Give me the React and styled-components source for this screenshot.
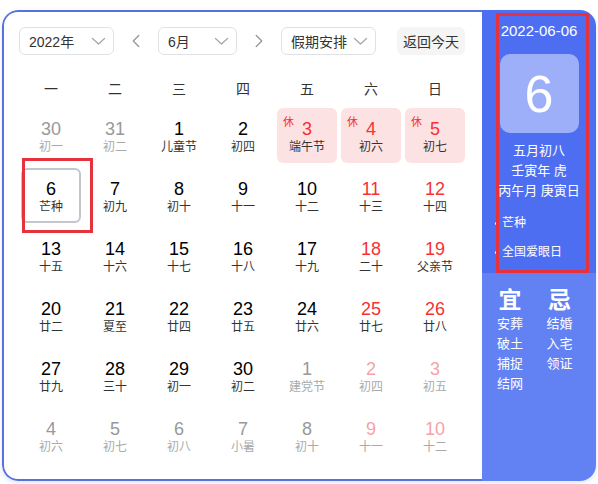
import React from 'react';
import styled, {createGlobalStyle} from 'styled-components';
import {ChevronLeft, ChevronRight} from 'lucide-react';

const GlobalStyle = createGlobalStyle`
  body {
    margin: 0;
    padding: 10px 2px 3px 2px;
    background: #fff;
    font-family: "Liberation Sans", "Noto Sans CJK SC", sans-serif;
  }
`
const Card = styled.div`
  position: relative;
  display: flex;
  width: 594px;
  height: 471px;
  border-radius: 16px;
  overflow: hidden;
  box-shadow: 0 2px 4px rgba(78, 110, 242, 0.18);
`
const Main = styled.div`
  flex: 1;
  box-sizing: border-box;
  border: 2px solid #5872dc;
  border-right: none;
  border-radius: 16px 0 0 16px;
  padding: 15px 15px 0 15px;
  background: #fff;
`
const Toolbar = styled.div`
  display: flex;
  align-items: center;
  height: 28px;
`
const Select = styled.div`
  box-sizing: border-box;
  display: flex;
  align-items: center;
  justify-content: space-between;
  width: ${props => props.w}px;
  height: 28px;
  padding: 0 7px 0 9px;
  border: 1px solid #dfe1e5;
  border-radius: 6px;
  font-size: 14px;
  color: #333;
`
const Arrow = styled.div`
  width: 44px;
  display: flex;
  justify-content: center;
  color: #9a9a9a;
`
const TodayBtn = styled.div`
  margin-left: 21px;
  width: 68px;
  height: 28px;
  display: flex;
  align-items: center;
  justify-content: center;
  background: #f5f5f6;
  border-radius: 6px;
  font-size: 14px;
  color: #333;
`
const WeekHead = styled.div`
  display: grid;
  grid-template-columns: repeat(7, 64px);
  margin-top: 22px;
  height: 24px;
  line-height: 24px;
  font-size: 14px;
  color: #333;
  text-align: center;
`
const Grid = styled.div`
  display: grid;
  grid-template-columns: repeat(7, 64px);
  grid-auto-rows: 55px;
  row-gap: 5px;
  margin-top: 7px;
`
const Cell = styled.div`
  position: relative;
  box-sizing: border-box;
  width: 60px;
  justify-self: center;
  display: flex;
  flex-direction: column;
  align-items: center;
  padding-top: ${props => props.today ? 8 : 10}px;
  border-radius: 6px;
  background: ${props => props.rest ? '#fde2e4' : 'transparent'};
  border: ${props => props.today ? '2px solid #c3c6cc' : 'none'};
`
const Num = styled.div`
  font-size: 18px;
  line-height: 22px;
  color: ${props => props.color};
`
const Lunar = styled.div`
  font-size: 12px;
  line-height: 14px;
  color: ${props => props.color};
`
const RestTag = styled.span`
  position: absolute;
  left: 6px;
  top: 5px;
  font-size: 11px;
  color: #f73131;
`
const Side = styled.div`
  width: 114px;
  flex-shrink: 0;
  display: flex;
  flex-direction: column;
  color: #fff;
`
const SideTop = styled.div`
  height: 263px;
  background: #4e6ef2;
  display: flex;
  flex-direction: column;
  align-items: center;
  padding-top: 11px;
  box-sizing: border-box;
`
const DateText = styled.div`
  font-size: 15px;
  line-height: 20px;
`
const BigDay = styled.div`
  margin-top: 13px;
  width: 79px;
  height: 79px;
  border-radius: 10px;
  background: rgba(255, 255, 255, 0.45);
  display: flex;
  align-items: center;
  justify-content: center;
  font-size: 52px;
  margin-bottom: 8px;
`
const InfoLine = styled.div`
  font-size: 13px;
  line-height: 20px;
  white-space: nowrap;
`
const Terms = styled.div`
  align-self: stretch;
  display: flex;
  flex-direction: column;
  gap: 9px;
  margin-top: 12px;
  padding-left: 13px;
`
const Term = styled.div`
  font-size: 12px;
  line-height: 20px;
  &::before {
    content: '';
    display: inline-block;
    width: 3px;
    height: 3px;
    border-radius: 50%;
    background: #fff;
    margin-right: 4px;
    vertical-align: middle;
  }
`
const SideBottom = styled.div`
  flex: 1;
  background: #6282f3;
  display: flex;
  padding: 14px 0 0 15px;
`
const Col = styled.div`
  width: 56px;
  display: flex;
  flex-direction: column;
`
const ColHead = styled.div`
  font-size: 23px;
  font-weight: bold;
  line-height: 27px;
  width: 26px;
  text-align: center;
`
const ColItem = styled.div`
  font-size: 13px;
  line-height: 20px;
`
const Mark = styled.div`
  position: absolute;
  left: ${props => props.x}px;
  top: ${props => props.y}px;
  width: ${props => props.w}px;
  height: ${props => props.h}px;
  box-sizing: border-box;
  border: 3px solid #e5323c;
  pointer-events: none;
`

const Caret = () => (
  <svg width="15" height="9" viewBox="0 0 15 9" fill="none">
    <path d="M1.5 1.5 L7.5 7 L13.5 1.5" stroke="#a8a8a8" strokeWidth="1.3" strokeLinecap="round" strokeLinejoin="round" />
  </svg>
);

// [day, lunar, type] type: n normal, w weekend, r rest day, t today, o other month, ow other weekend
const days = [
  [30,'初一','o'],[31,'初二','o'],[1,'儿童节','n'],[2,'初四','n'],[3,'端午节','r'],[4,'初六','r'],[5,'初七','r'],
  [6,'芒种','t'],[7,'初九','n'],[8,'初十','n'],[9,'十一','n'],[10,'十二','n'],[11,'十三','w'],[12,'十四','w'],
  [13,'十五','n'],[14,'十六','n'],[15,'十七','n'],[16,'十八','n'],[17,'十九','n'],[18,'二十','w'],[19,'父亲节','w'],
  [20,'廿二','n'],[21,'夏至','n'],[22,'廿四','n'],[23,'廿五','n'],[24,'廿六','n'],[25,'廿七','w'],[26,'廿八','w'],
  [27,'廿九','n'],[28,'三十','n'],[29,'初一','n'],[30,'初二','n'],[1,'建党节','o'],[2,'初四','ow'],[3,'初五','ow'],
  [4,'初六','o'],[5,'初七','o'],[6,'初八','o'],[7,'小暑','o'],[8,'初十','o'],[9,'十一','ow'],[10,'十二','ow'],
];

const numColor = {n: '#000', t: '#000', w: '#f73131', r: '#f73131', o: '#999', ow: '#f5a3a8'};
const lunarColor = {n: '#333', t: '#333', w: '#333', r: '#333', o: '#aaa', ow: '#aaa'};

export default function App(){
  return (
    <>
      <GlobalStyle />
      <Card>
        <Main>
          <Toolbar>
            <Select w={95}>2022年<Caret /></Select>
            <Arrow><ChevronLeft size={22} strokeWidth={1.5} /></Arrow>
            <Select w={79}>6月<Caret /></Select>
            <Arrow><ChevronRight size={22} strokeWidth={1.5} /></Arrow>
            <Select w={95}>假期安排<Caret /></Select>
            <TodayBtn>返回今天</TodayBtn>
          </Toolbar>
          <WeekHead>
            {['一','二','三','四','五','六','日'].map(d => <div key={d}>{d}</div>)}
          </WeekHead>
          <Grid>
            {days.map(([d, l, t], i) => (
              <Cell key={i} rest={t === 'r'} today={t === 't'}>
                {t === 'r' && <RestTag>休</RestTag>}
                <Num color={numColor[t]}>{d}</Num>
                <Lunar color={lunarColor[t]}>{l}</Lunar>
              </Cell>
            ))}
          </Grid>
        </Main>
        <Side>
          <SideTop>
            <DateText>2022-06-06</DateText>
            <BigDay>6</BigDay>
            <InfoLine>五月初八</InfoLine>
            <InfoLine>壬寅年 虎</InfoLine>
            <InfoLine>丙午月 庚寅日</InfoLine>
            <Terms>
              <Term>芒种</Term>
              <Term>全国爱眼日</Term>
            </Terms>
          </SideTop>
          <SideBottom>
            <Col>
              <ColHead>宜</ColHead>
              {['安葬','破土','捕捉','结网'].map(s => <ColItem key={s}>{s}</ColItem>)}
            </Col>
            <Col>
              <ColHead>忌</ColHead>
              {['结婚','入宅','领证'].map(s => <ColItem key={s}>{s}</ColItem>)}
            </Col>
          </SideBottom>
        </Side>
        <Mark x={20} y={148} w={71} h={75} />
        <Mark x={494} y={3} w={93} h={260} />
      </Card>
    </>
  );
}
